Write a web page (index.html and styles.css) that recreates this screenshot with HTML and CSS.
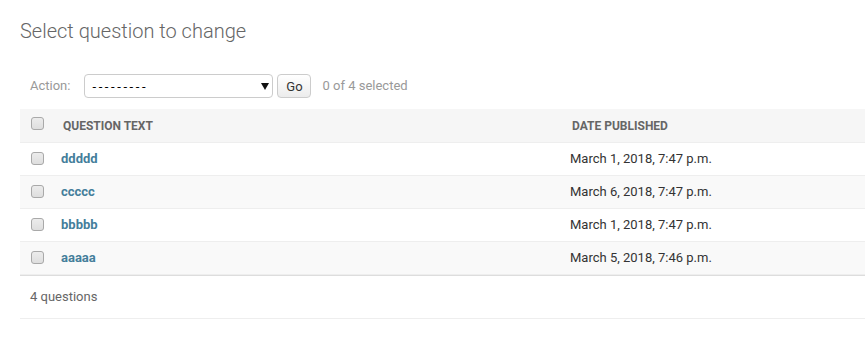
FILE: index.html
```html
<!DOCTYPE html>
<html>
<head>
<meta charset="utf-8">
<link rel="stylesheet" href="styles.css">
</head>
<body>
<div class="content">
  <h1 class="title">Select question to change</h1>
  <form class="changelist">
    <div class="actions">
      <label class="action-label">Action:</label>
      <span class="select-wrap">
        <select class="action-select"><option>---------</option></select>
      </span>
      <button type="button" class="go-btn">Go</button>
      <span class="counter">0 of 4 selected</span>
    </div>
    <table class="results">
      <colgroup><col class="c-check"><col class="c-text"><col class="c-date"></colgroup>
      <thead>
        <tr>
          <th class="th-check"><input type="checkbox" class="cb"></th>
          <th><span class="th-text">Question text</span></th>
          <th><span class="th-text">Date published</span></th>
        </tr>
      </thead>
      <tbody>
        <tr class="row1"><td class="td-check"><input type="checkbox" class="cb"></td><th class="td-link"><a href="#">ddddd</a></th><td class="td-date">March 1, 2018, 7:47 p.m.</td></tr>
        <tr class="row2"><td class="td-check"><input type="checkbox" class="cb"></td><th class="td-link"><a href="#">ccccc</a></th><td class="td-date">March 6, 2018, 7:47 p.m.</td></tr>
        <tr class="row1"><td class="td-check"><input type="checkbox" class="cb"></td><th class="td-link"><a href="#">bbbbb</a></th><td class="td-date">March 1, 2018, 7:47 p.m.</td></tr>
        <tr class="row2"><td class="td-check"><input type="checkbox" class="cb"></td><th class="td-link"><a href="#">aaaaa</a></th><td class="td-date">March 5, 2018, 7:46 p.m.</td></tr>
      </tbody>
    </table>
    <p class="paginator">4 questions</p>
  </form>
</div>
</body>
</html>
```

FILE: styles.css
```css
html, body {
  margin: 0;
  padding: 0;
  background: #fff;
}
body {
  font-family: Roboto, "Liberation Sans", sans-serif;
  font-size: 14px;
  color: #333;
  width: 880px;
}
.content {
  padding: 20px 0 0 20px;
}
.title {
  margin: 0 0 20px;
  font-size: 20px;
  font-weight: 300;
  color: #666;
  line-height: 23px;
}
.actions {
  display: flex;
  align-items: center;
  padding: 11px 10px;
  line-height: 24px;
  color: #999;
  font-size: 13px;
}
.action-label {
  margin-right: 14px;
}
.select-wrap {
  position: relative;
  display: inline-block;
}
.select-wrap::after {
  content: "";
  position: absolute;
  right: 4px;
  top: 9px;
  border-left: 4px solid transparent;
  border-right: 4px solid transparent;
  border-top: 7px solid #111;
  pointer-events: none;
}
.action-select {
  -webkit-appearance: none;
  appearance: none;
  width: 189px;
  height: 24px;
  box-sizing: border-box;
  border: 1px solid #ccc;
  border-radius: 4px;
  background: #fff;
  padding: 0 7px;
  font-family: Roboto, "Liberation Sans", sans-serif;
  font-size: 13px;
  letter-spacing: 2.6px;
  color: #000;
  display: block;
}
.go-btn {
  margin-left: 4px;
  width: 34px;
  height: 24px;
  box-sizing: border-box;
  border: 1px solid #ccc;
  border-radius: 4px;
  background: linear-gradient(#fff, #ececec);
  font-family: Roboto, "Liberation Sans", sans-serif;
  font-size: 13px;
  color: #333;
  padding: 0;
}
.counter {
  margin-left: 11px;
  color: #999;
}
.results {
  border-collapse: collapse;
  table-layout: fixed;
  width: 900px;
}
.c-check { width: 33px; }
.c-text { width: 509px; }
.cb {
  -webkit-appearance: none;
  appearance: none;
  display: block;
  width: 13px;
  height: 13px;
  box-sizing: border-box;
  margin: 0 auto;
  border: 1px solid #a9a9a9;
  border-radius: 3px;
  background: linear-gradient(#ececec, #dedede);
}
.results thead th {
  background: #f6f6f6;
  padding: 0;
  text-align: left;
  vertical-align: middle;
  border-bottom: 1px solid #eee;
  color: #666;
  font-size: 12px;
  font-weight: 700;
  text-transform: uppercase;
  white-space: nowrap;
}
.th-text {
  display: block;
  padding: 9px 10px 8px;
  line-height: 16px;
}
.results thead th.th-check {
  vertical-align: top;
  padding: 8px 0 0 1px;
}
.results tbody td, .results tbody th {
  padding: 8px;
  line-height: 16px;
  font-size: 13px;
  border-bottom: 1px solid #eee;
  text-align: left;
  vertical-align: top;
}
.results tbody .td-check {
  padding: 9px 0 8px 1px;
}
.row1 { background: #fff; }
.row2 { background: #f9f9f9; }
.td-link a {
  color: #447e9b;
  font-weight: 700;
  text-decoration: none;
}
.td-date {
  color: #333;
}
.paginator {
  margin: 0;
  font-size: 13px;
  line-height: 22px;
  padding: 10px;
  color: #666;
  border-top: 1px solid #ddd;
  border-bottom: 1px solid #eee;
  width: 825px;
}
```
